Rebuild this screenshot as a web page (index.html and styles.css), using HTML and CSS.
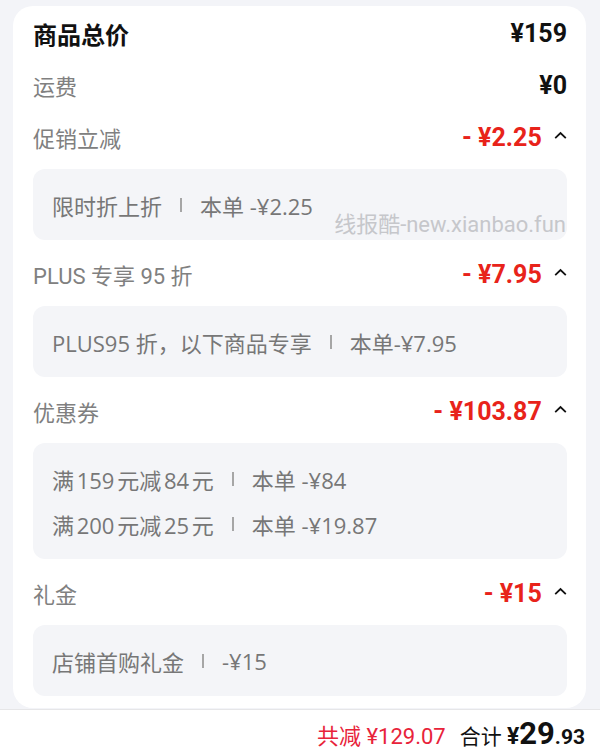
FILE: index.html
```html
<!DOCTYPE html>
<html lang="zh-CN">
<head>
  <meta charset="UTF-8" />
  <meta name="viewport" content="width=device-width, initial-scale=1" />
  <title>订单金额明细</title>
  <link rel="stylesheet" href="styles.css">
</head>
<body>

  <div class="page">
    <div class="card">

      <div class="row">
        <span class="title">商品总价</span>
        <span class="amount">¥159</span>
      </div>

      <div class="row">
        <span class="label">运费</span>
        <span class="amount">¥0</span>
      </div>

      <div class="row">
        <span class="label">促销立减</span>
        <span class="discount">- ¥2.25 <svg class="caret" width="13" height="9" viewBox="0 0 13 9"><path d="M1.2 7.2 L6.5 2 L11.8 7.2" fill="none" stroke="#111" stroke-width="1.8"/></svg></span>
      </div>
      <div class="box">
        <div class="line">限时折上折<i class="sep"></i>本单 -¥2.25</div>
        <div class="watermark">线报酷-new.xianbao.fun</div>
      </div>

      <div class="row">
        <span class="label">PLUS 专享 95 折</span>
        <span class="discount">- ¥7.95 <svg class="caret" width="13" height="9" viewBox="0 0 13 9"><path d="M1.2 7.2 L6.5 2 L11.8 7.2" fill="none" stroke="#111" stroke-width="1.8"/></svg></span>
      </div>
      <div class="box">
        <div class="line">PLUS95 折，以下商品专享<i class="sep"></i>本单-¥7.95</div>
      </div>

      <div class="row">
        <span class="label">优惠券</span>
        <span class="discount">- ¥103.87 <svg class="caret" width="13" height="9" viewBox="0 0 13 9"><path d="M1.2 7.2 L6.5 2 L11.8 7.2" fill="none" stroke="#111" stroke-width="1.8"/></svg></span>
      </div>
      <div class="box">
        <div class="line"><span class="tight">满 159 元减 84 元</span><i class="sep"></i>本单 -¥84</div>
        <div class="line"><span class="tight">满 200 元减 25 元</span><i class="sep"></i>本单 -¥19.87</div>
      </div>

      <div class="row">
        <span class="label">礼金</span>
        <span class="discount">- ¥15 <svg class="caret" width="13" height="9" viewBox="0 0 13 9"><path d="M1.2 7.2 L6.5 2 L11.8 7.2" fill="none" stroke="#111" stroke-width="1.8"/></svg></span>
      </div>
      <div class="box">
        <div class="line">店铺首购礼金<i class="sep"></i>-¥15</div>
      </div>

    </div>
  </div>

  <footer class="total-bar">
    <span class="saved">共减 ¥129.07</span>
    <span class="sum">合计 <b class="yen">¥</b><b class="big">29</b><b class="cents">.93</b></span>
  </footer>

</body>
</html>
```

FILE: styles.css
```css
body {
  margin: 0;
  font-family: Roboto, "Noto Sans CJK SC", sans-serif;
  background-color: #f3f4f8;
  color: #1a1a1a;
}

.page {
  padding: 6px 14px 1px 13px;
}

.card {
  background-color: #ffffff;
  border-radius: 20px;
  padding: 3px 19px 12px 20px;
}

.row {
  display: flex;
  justify-content: space-between;
  align-items: center;
  height: 48px;
  padding-bottom: 4px;
}

.title {
  font-size: 24px;
  font-weight: bold;
  color: #111;
}

.label {
  font-size: 22px;
  color: #808080;
}

.amount {
  font-size: 25px;
  font-weight: bold;
  color: #111;
}

.discount {
  display: flex;
  align-items: center;
  font-size: 25px;
  font-weight: bold;
  color: #e8231a;
  white-space: pre;
}

.caret {
  margin-left: 6px;
  margin-bottom: 4px;
}

.box {
  position: relative;
  background-color: #f4f5f8;
  border-radius: 12px;
  padding: 13px 19px;
  margin: 4px 0 10px;
}

.box:last-child {
  margin-bottom: 0;
}

.line {
  display: flex;
  align-items: center;
  height: 45px;
  font-family: "Open Sans", "Noto Sans CJK SC", sans-serif;
  font-size: 22px;
  color: #777;
  white-space: pre;
}

.tight {
  word-spacing: -3px;
}

.sep {
  display: inline-block;
  width: 2px;
  height: 14px;
  background-color: #a6a6a6;
  margin: 0 18px;
}

.watermark {
  position: absolute;
  right: 1px;
  bottom: 2px;
  font-family: Roboto, "Noto Sans CJK SC", sans-serif;
  font-size: 22px;
  color: #c6c7cb;
}

.total-bar {
  display: flex;
  justify-content: flex-end;
  align-items: center;
  height: 43px;
  padding: 2px 15px 0 0;
  background-color: #ffffff;
  border-top: 1px solid #e6e6e8;
}

.saved {
  font-size: 22px;
  color: #e8233a;
  margin-right: 14px;
}

.sum {
  font-size: 21px;
  color: #111;
}

.yen {
  font-size: 23px;
}

.big {
  font-size: 31px;
}

.cents {
  font-size: 21px;
}
```
